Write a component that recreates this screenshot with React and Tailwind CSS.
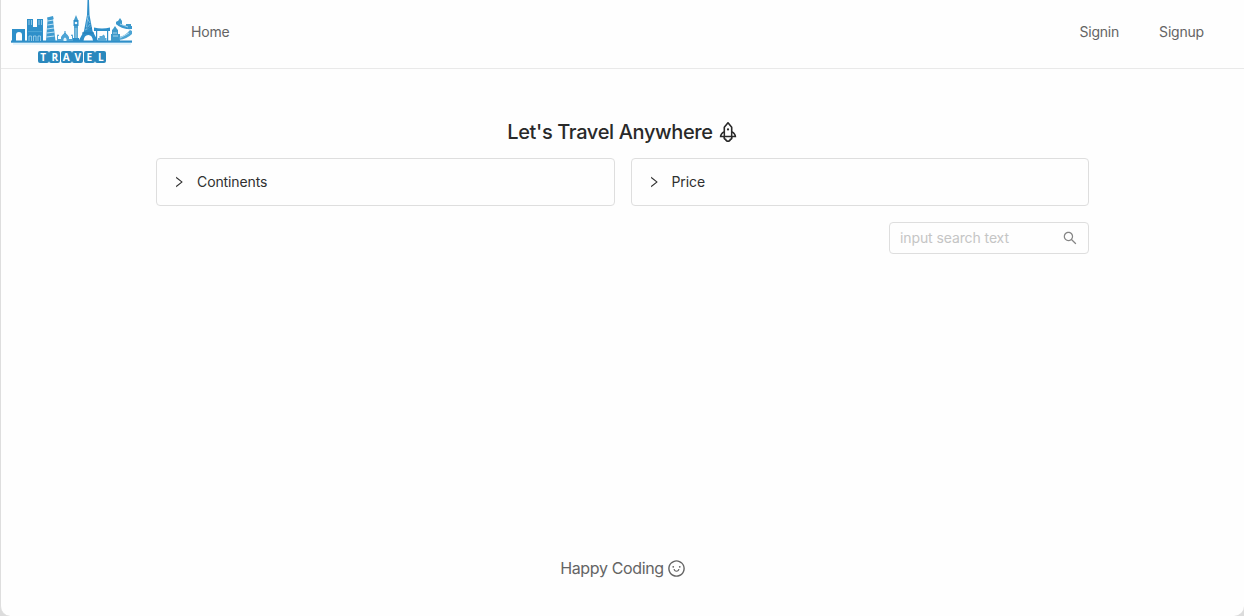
import React from "react";
import {
  AiOutlineRight,
  AiOutlineRocket,
  AiOutlineSearch,
  AiOutlineSmile,
} from "react-icons/ai";

function Skyline() {
  return (
    <svg width="122" height="46" viewBox="0 0 122 46" className="block" fill="#2e8fc9">
      {/* ground */}
      <rect x="0" y="40.500" width="121" height="2.200" />
      <rect x="2" y="43" width="118" height="2" fill="#e3f3fb" />
      {/* arch */}
      <path fillRule="evenodd" d="M1 29h13v12h-3v-6q0-3-3-3t-3 3v6H1z" />
      {/* cathedral */}
      <path d="M16 19h6v8h4v-8h6v22H16z" />
      <path d="M18 20v5M20.500 20v5M28 20v5M30.500 20v5M18 41v-5h2.500v5M22.500 41v-5h2.500v5M27 41v-5h2.500v5" stroke="#b9dff2" strokeWidth="0.7" fill="none" />
      <path d="M17 31.500h14" stroke="#4ba4d5" strokeWidth="1.200" />
      {/* leaning tower */}
      <path d="M36 17.500l6-1.500 .7 3-.7.5L44.500 41H35l1.500-21z" fill="#3f9bd0" />
      <path d="M36.500 21l6-1M36.500 25l6.500-1M36 29l7-1M36 33l7.500-1M35.500 37l8-1" stroke="#d1ebf8" strokeWidth=".9" />
      {/* dome */}
      <path d="M46 41v-5h1v3h3v-2q1-2 4-4.500q3 2.500 4 4.500v2h3v-3h1v5z" fill="#4da4d5" />
      <path d="M53.500 31h1v3h-1zM47 34l1 2h-2zM61 34l1 2h-2z" />
      <path d="M52.500 41v-2q1.500-3 3 0v2" fill="#e1f3fc" />
      {/* clock tower */}
      <path d="M65 15l2 5v21h-4V20z" fill="#499fce" />
      <rect x="62.500" y="20" width="5" height="6" />
      <circle cx="65" cy="23" r="1.300" fill="#eef9ff" />
      <path d="M64.200 28v11M65.800 28v11" stroke="#bee2f3" strokeWidth=".6" />
      <rect x="62" y="38" width="6" height="3" />
      {/* iron tower */}
      <path d="M76.500 0H78l.5 15L81.500 31 87 41h-5q-.5-6-4.700-6T72.500 41h-5L73 31l3-16z" />
      <path d="M77.200 15l-2 14 4-5M76 18l3 5M74 30l6-3" stroke="#a9d7ee" strokeWidth=".6" fill="none" />
      <path d="M74 28h7M71 33h12" stroke="#237eb6" strokeWidth="1.200" />
      {/* gate */}
      <path d="M83 27.500q8 2 16 0v3.500H83zM85 30h1.200v11H85zM96 30h1.200v11H96z" />
      <path d="M87 38h1.500v-2H91l1.500-1.500L94 36v2h1.500v3H87z" fill="#58aad7" />
      {/* bridge */}
      <path d="M101 30l1-1 2-3 2 3 1 1v4h2v7h-9v-7h1z" fill="#3e9aca" />
      <path d="M105 22l2-1 2-3 2 3v5l-6-2zM115 24h5v5h-5z" fill="#3e9aca" />
      <path d="M106 21q4 5 15 5v3q-10 1-16-5z" fill="#3a98ce" />
      <path d="M108 37q6-1 11-7l2 1v3q-5 5-13 6z" fill="#4ca4d4" />
      <path d="M102 33h4M102 36h5M109 24l8 3M109 38l9-5" stroke="#d4eef9" strokeWidth=".7" />
    </svg>
  );
}

function Logo() {
  return (
    <a href="#" aria-label="Travel" className="flex w-[122px] shrink-0 flex-col items-center">
      <Skyline />
      <span className="mt-[5px] flex gap-[0.5px]">
        {["T", "R", "A", "V", "E", "L"].map((letter) => (
          <span
            key={letter}
            className="flex h-3 w-[11px] items-center justify-center rounded-[2px] bg-[#2a88bd] font-['Open_Sans',sans-serif] text-[10px] leading-none font-bold text-white"
          >
            {letter}
          </span>
        ))}
      </span>
    </a>
  );
}

function Filter({ label }) {
  return (
    <button className="flex h-12 flex-1 items-center rounded-[4px] border border-[#dedede] pl-4 text-left text-[#303030]">
      <AiOutlineRight className="mr-[11px] -ml-px size-[14px]" />
      <span className="tracking-[-0.1px]">{label}</span>
    </button>
  );
}

export default function App() {
  return (
    <div className="bg-[#dcdcdc]">
      <div className="flex h-[616px] flex-col overflow-hidden rounded-b-[10px] border-l border-[#dedede] bg-[#fefefe] font-['Inter','Liberation_Sans',sans-serif] text-sm text-[#646464]">
        <header className="flex h-[69px] shrink-0 items-start border-b border-[#e9e9e9] pl-[10px]">
          <Logo />
          <nav className="flex flex-1 pt-[22px] pr-10 pl-[58px] leading-5 tracking-[-0.2px]">
            <a href="#">Home</a>
            <a href="#" className="ml-auto">Signin</a>
            <a href="#" className="ml-10">Signup</a>
          </nav>
        </header>
        <main className="mx-auto w-[933px] pt-[47px]">
          <h1 className="flex h-8 items-center justify-center pl-[2px] text-xl font-medium tracking-[-0.35px] text-[#292929]">
            Let&apos;s Travel Anywhere
            <AiOutlineRocket className="ml-[3px] size-6" />
          </h1>
          <div className="mt-[10px] flex gap-4">
            <Filter label="Continents" />
            <Filter label="Price" />
          </div>
          <div className="mt-4 ml-auto flex h-8 w-[200px] items-center rounded-[4px] border border-[#dedede] pr-[10px] pl-[10px]">
            <input
              placeholder="input search text"
              className="w-0 flex-1 tracking-[-0.1px] outline-none placeholder:text-[#c5c5c5]"
            />
            <AiOutlineSearch className="size-4 text-[#858585]" />
          </div>
        </main>
        <footer className="mt-auto mb-9 flex h-6 items-center justify-center pl-px text-base tracking-[-0.36px] text-[#646464]">
          Happy Coding
          <AiOutlineSmile className="ml-[3px] size-[19px]" />
        </footer>
      </div>
    </div>
  );
}
